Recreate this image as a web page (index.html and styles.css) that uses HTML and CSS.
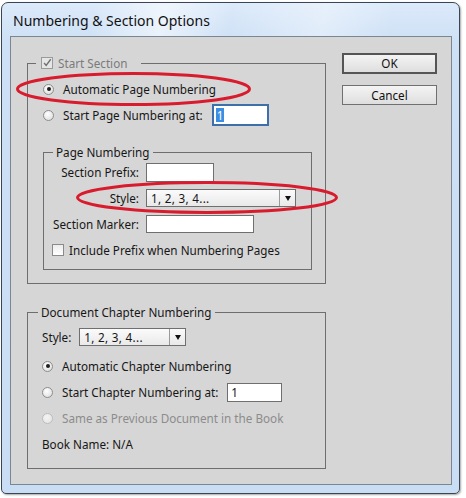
FILE: index.html
```html
<!DOCTYPE html>
<html>
<head>
<meta charset="utf-8">
<link rel="stylesheet" href="styles.css">
</head>
<body>
<div class="window">
  <div class="titlebar">Numbering &amp; Section Options</div>
  <div class="client">
    <div class="main">
      <fieldset class="group start">
        <legend class="legend-start"><span class="check disabled"><svg width="12" height="12" viewBox="0 0 12 12"><path d="M2.5 6 L5 9 L10.5 1.5" fill="none" stroke="#6f6f6f" stroke-width="1.6"/></svg></span>Start Section</legend>
        <div class="row first"><span class="radio on"></span>Automatic Page Numbering</div>
        <div class="row"><span class="radio"></span>Start Page Numbering at:<span class="field focus w-start"><span class="sel">1</span></span></div>
        <fieldset class="group pagenum">
          <legend class="legend-page">Page Numbering</legend>
          <div class="row"><span class="lbl">Section Prefix:</span><span class="field w-prefix"></span></div>
          <div class="row"><span class="lbl">Style:</span><span class="select w-style"><span class="sel-text">1, 2, 3, 4...</span><span class="arrow"></span></span></div>
          <div class="row"><span class="lbl">Section Marker:</span><span class="field w-marker"></span></div>
          <div class="row"><span class="check box-incl"></span>Include Prefix when Numbering Pages</div>
        </fieldset>
      </fieldset>
      <fieldset class="group chapter">
        <legend class="legend-chapter">Document Chapter Numbering</legend>
        <div class="row style-row">Style:<span class="select w-cstyle"><span class="sel-text">1, 2, 3, 4...</span><span class="arrow"></span></span></div>
        <div class="row"><span class="radio on"></span>Automatic Chapter Numbering</div>
        <div class="row"><span class="radio"></span>Start Chapter Numbering at:<span class="field w-cstart"><span class="val">1</span></span></div>
        <div class="row muted"><span class="radio dis"></span>Same as Previous Document in the Book</div>
        <div class="row">Book Name: N/A</div>
      </fieldset>
    </div>
    <div class="buttons">
      <div class="btn default">OK</div>
      <div class="btn">Cancel</div>
    </div>
  </div>
</div>
<svg class="annot" width="466" height="498" viewBox="0 0 466 498">
  <ellipse cx="133.5" cy="89" rx="116" ry="15.5" fill="none" stroke="#d81c2d" stroke-width="3"/>
  <ellipse cx="207" cy="197.5" rx="129.5" ry="15" fill="none" stroke="#d81c2d" stroke-width="3"/>
</svg>
</body>
</html>
```
FILE: styles.css
```css
html, body {
  margin: 0;
  padding: 0;
}
body {
  width: 466px;
  height: 498px;
  background: #ffffff;
  position: relative;
  overflow: hidden;
  font-family: "Noto Sans", "DejaVu Sans", sans-serif;
  font-size: 11.7px;
  color: #161616;
}
.window {
  margin: 2px 0 0 1px;
  width: 459px;
  height: 492px;
  box-sizing: border-box;
  border: 1px solid #3a4654;
  border-radius: 7px 7px 5px 5px;
  padding: 0 7px 8px 8px;
  background:
    linear-gradient(100deg, rgba(255,255,255,0) 20%, rgba(255,255,255,0.55) 35%, rgba(255,255,255,0) 50%, rgba(255,255,255,0.35) 70%, rgba(255,255,255,0) 85%) top / 100% 36px no-repeat,
    linear-gradient(#dceafa, #cde0f5 40px, #c9ddf4);
  box-shadow: 1px 1px 2px rgba(0,0,0,0.35);
  display: flex;
  flex-direction: column;
}
.titlebar {
  height: 30px;
  padding: 3px 0 0 3px;
  line-height: 30px;
  font-size: 14px;
  color: #111;
  white-space: nowrap;
}
.client {
  width: 442px;
  height: 449px;
  box-sizing: border-box;
  border: 1px solid #7b8693;
  background: #d6d6d6;
  display: flex;
  align-items: flex-start;
}
.main {
  margin: 19px 0 0 16px;
  width: 299px;
}
.group {
  margin: 0;
  border: 1px solid #6e6e6e;
  min-width: 0;
}
.group legend {
  line-height: 14px;
  height: 14px;
  padding: 0 3px;
  white-space: nowrap;
}
.start {
  padding: 0 13px 13px 15px;
}
.legend-start {
  margin-left: -7px;
  color: #7b7b7b;
  display: flex;
  align-items: center;
}
.start .legend-start {
  padding: 0 14px 0 5px;
}
.row {
  height: 26px;
  display: flex;
  align-items: center;
  white-space: nowrap;
}
.row.first {
  margin-top: 6px;
}
.radio {
  width: 11px;
  height: 11px;
  box-sizing: border-box;
  border-radius: 50%;
  border: 1px solid #8d8d8d;
  background: radial-gradient(circle at 40% 35%, #ffffff, #e4e4e4 70%, #d0d0d0);
  margin-right: 9px;
  flex: none;
  position: relative;
  display: flex;
  align-items: center;
  justify-content: center;
}
.radio.on::after {
  content: "";
  width: 4px;
  height: 4px;
  border-radius: 50%;
  background: #1e1e1e;
}
.radio.dis {
  border-color: #bdbdbd;
  background: radial-gradient(circle at 40% 35%, #f4f4f4, #e2e2e2);
}
.check {
  width: 12px;
  height: 12px;
  box-sizing: border-box;
  border: 1px solid #8a8a8a;
  background: linear-gradient(#ececec, #ffffff);
  flex: none;
  display: flex;
  align-items: center;
  justify-content: center;
}
.check.disabled {
  border-color: #9a9a9a;
  background: #e6e6e6;
  margin-right: 5px;
}
.check svg {
  display: block;
}
.field {
  display: flex;
  align-items: center;
  height: 19px;
  box-sizing: border-box;
  background: #ffffff;
  border: 1px solid #6f6f6f;
  flex: none;
}
.field.focus {
  border: 2px solid #3d70ab;
  height: 22px;
}
.w-start {
  width: 57px;
  margin-left: 9px;
}
.sel {
  background: #3b8ee3;
  color: #ffffff;
  line-height: 14px;
  padding: 0 1px;
  margin-left: 2px;
}
.pagenum {
  margin-top: 17px;
  width: 269px;
  box-sizing: border-box;
  padding: 0 0 6px 0;
}
.legend-page {
  margin-left: 9px;
}
.lbl {
  width: 95px;
  text-align: right;
  margin-right: 7px;
  flex: none;
}
.w-prefix {
  width: 68px;
}
.w-marker {
  width: 108px;
  height: 18px;
}
.select {
  display: flex;
  align-items: center;
  height: 18px;
  box-sizing: border-box;
  border: 1px solid #6f6f6f;
  background: linear-gradient(#fbfbfb, #e9e9e9);
  position: relative;
  flex: none;
}
.sel-text {
  flex: 1;
  padding-left: 4px;
  letter-spacing: 0.3px;
}
.arrow {
  width: 16px;
  height: 100%;
  border-left: 1px solid #9a9a9a;
  box-sizing: border-box;
  display: flex;
  align-items: center;
  justify-content: center;
}
.arrow::after {
  content: "";
  border-left: 3.5px solid transparent;
  border-right: 3.5px solid transparent;
  border-top: 5px solid #111;
}
.w-style {
  width: 150px;
}
.box-incl {
  margin: 0 5px 0 8px;
}
.chapter {
  margin-top: 21px;
  padding: 0 13px 11px 14px;
}
.legend-chapter {
  margin-left: -4px;
}
.style-row {
  margin-top: 5px;
  margin-bottom: 3px;
}
.w-cstyle {
  width: 107px;
  margin-left: 8px;
}
.w-cstart {
  width: 55px;
  margin-left: 9px;
}
.val {
  padding-left: 3px;
}
.muted {
  color: #8c8c8c;
}
.buttons {
  margin: 16px 0 0 16px;
  width: 95px;
  display: flex;
  flex-direction: column;
  gap: 11px;
}
.btn {
  height: 20px;
  box-sizing: border-box;
  border: 1px solid #707070;
  background: linear-gradient(#f4f4f4, #dedede);
  text-align: center;
  line-height: 18px;
  color: #111;
}
.btn.default {
  height: 21px;
  border: 2px solid #555555;
  line-height: 17px;
}
.annot {
  position: absolute;
  left: 0;
  top: 0;
  pointer-events: none;
}
```
